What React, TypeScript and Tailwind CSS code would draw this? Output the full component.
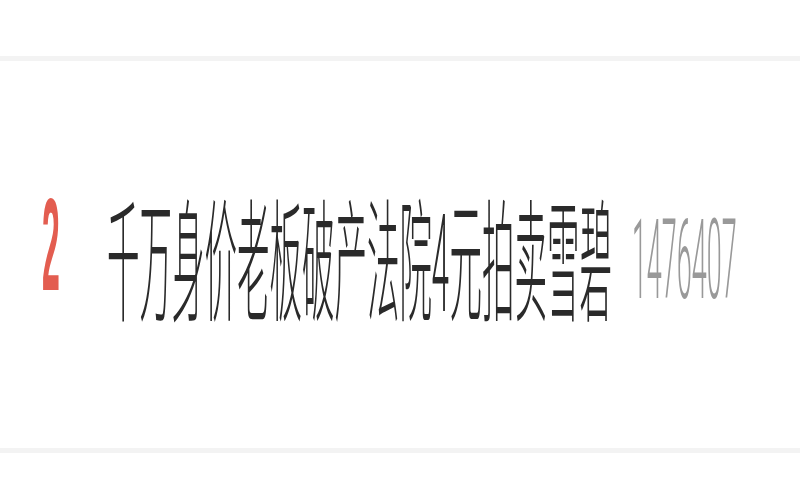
export default function App() {
  return (
    <div className="flex h-[500px] w-full flex-col bg-white">
      <div className="h-[56px]" />
      <div className="h-[5px] bg-[#f3f3f3]" />
      <div className="flex flex-1 items-center overflow-hidden">
        <div className="flex w-full origin-center scale-y-[4.1] items-center pl-[42px]">
          <span
            className="w-[65px] text-[32px] font-bold leading-none text-[#e35d50] -translate-y-[2px]"
            style={{ fontFamily: '"Liberation Sans", Arial, sans-serif' }}
          >
            2
          </span>
          <span
            className="text-[32.5px] font-light leading-none text-[#2a2a2a]"
            style={{ fontFamily: '"Noto Sans CJK SC", "Noto Sans", sans-serif' }}
          >
            千万身价老板破产法院4元拍卖雪碧
          </span>
          <span
            className="ml-[20px] text-[27px] font-light leading-none text-[#999999] translate-y-[2px]"
            style={{ fontFamily: 'Roboto, "Liberation Sans", Arial, sans-serif' }}
          >
            1476407
          </span>
        </div>
      </div>
      <div className="h-[5px] bg-[#f3f3f3]" />
      <div className="h-[47px]" />
    </div>
  );
}
